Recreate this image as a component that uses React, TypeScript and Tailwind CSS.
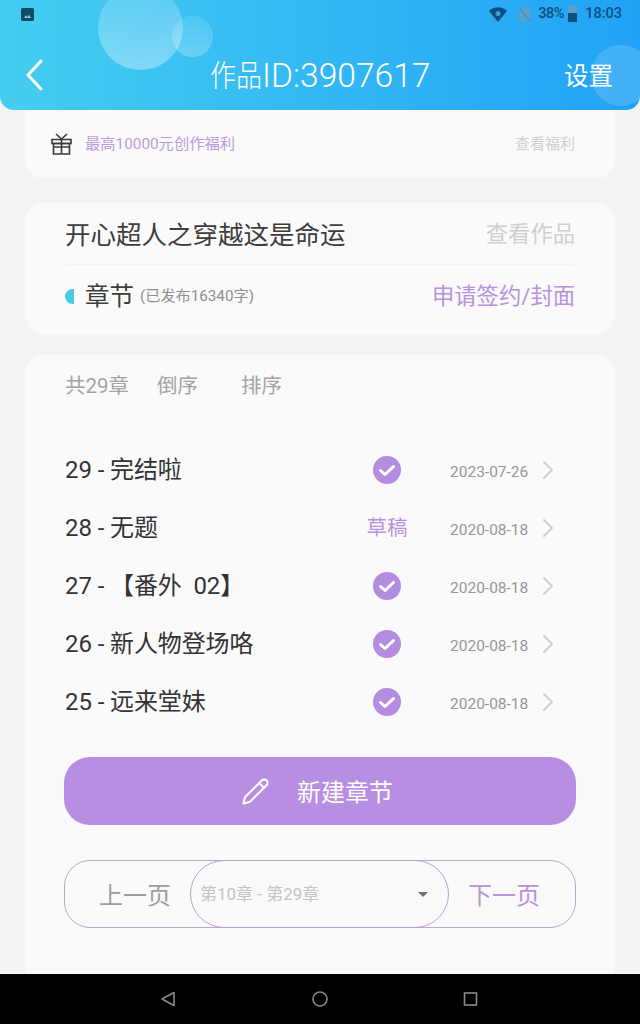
import { ChevronRight, Pencil } from "lucide-react";

const FONT = "font-['Roboto','Noto_Sans_CJK_SC',sans-serif]";

const CHAPTERS = [
  { title: "29 - 完结啦", date: "2023-07-26", draft: false },
  { title: "28 - 无题", date: "2020-08-18", draft: true },
  { title: "27 - 【番外  02】", date: "2020-08-18", draft: false },
  { title: "26 - 新人物登场咯", date: "2020-08-18", draft: false },
  { title: "25 - 远来堂妹", date: "2020-08-18", draft: false },
];

function StatusBar() {
  return (
    <div className="flex h-7 items-center justify-between pl-[21px] pr-[18px] text-[#0d4f7d]">
      <svg width="13" height="13" viewBox="0 0 13 13">
        <rect width="13" height="13" rx="1.5" fill="#0f4c68" />
        <path d="M3 10l2-3 1.500 2 1.500-2.500L10 10z" fill="#7fc4df" />
      </svg>
      <div className="flex items-center text-[14.500px] font-medium">
        <svg width="18" height="15" viewBox="0 0 18 15">
          <path d="M0 4C5 -1 13 -1 18 4L9 15z" fill="#0d4f7d" />
          <circle cx="9" cy="6.500" r="2.500" fill="#3d9fd6" />
        </svg>
        <svg className="ml-[12px]" width="11" height="15" viewBox="0 0 11 15">
          <path d="M3 0h8v15H0V3z" fill="#5c9fc9" />
          <path d="M0.500 1l10 13" stroke="#2b8fd0" strokeWidth="1.200" />
        </svg>
        <span className="ml-[8px] w-[30px] tracking-[-0.5px]">38%</span>
        <div className="flex h-[16px] w-[9px] flex-col justify-end rounded-[1px] bg-[#5c9fc9]">
          <div className="h-[9px] bg-[#0d4f7d]" />
        </div>
        <span className="ml-[8px]">18:03</span>
      </div>
    </div>
  );
}

function Header() {
  return (
    <header className="relative h-[110px] overflow-hidden rounded-b-[14px] bg-gradient-to-r from-[#45cdf0] to-[#22a2f6] text-white">
      <div className="absolute left-[98px] top-[-14px] h-[84px] w-[85px] rounded-full bg-gradient-to-b from-white/15 to-white/35" />
      <div className="absolute left-[172px] top-[16px] h-[41px] w-[41px] rounded-full bg-gradient-to-b from-white/10 to-white/25" />
      <div className="absolute left-[591px] top-[45px] h-[61px] w-[60px] rounded-full bg-white/15" />
      <div className="relative">
        <StatusBar />
        <div className="relative flex h-[82px] items-center justify-between pl-[25px] pr-[27px] pt-[12px]">
          <svg width="18" height="32" viewBox="0 0 18 32" fill="none">
            <path d="M16 2L3 16l13 14" stroke="white" strokeWidth="3" strokeLinecap="round" strokeLinejoin="round" />
          </svg>
          <h1 className="absolute left-[210px] top-[28px] flex h-[40px] items-center whitespace-nowrap font-light">
            <span className="inline-block scale-y-[1.15] text-[26px]">作品</span>
            <span className="text-[33.600px]">ID:3907617</span>
          </h1>
          <span className="mt-[3px] text-[24.500px] leading-8">设置</span>
        </div>
      </div>
    </header>
  );
}

function App() {
  return (
    <div className={`${FONT} relative h-[1024px] w-[640px] overflow-hidden bg-[#f4f4f4]`}>
      <Header />

      <main className="flex flex-col px-[26px]">
        <section className="flex h-[68px] items-center rounded-b-[16px] bg-[#fafafa] pl-[25px] pr-[39px]">
          <svg width="21" height="22" viewBox="0 0 21 22" fill="none" stroke="#3a3a3a" strokeWidth="1.600">
            <path d="M5 1l5.500 5L16 1" />
            <path d="M1 6.500h19v4H1z" />
            <path d="M2.500 10.500h16V21h-16z" />
            <path d="M10.500 6.500V21M2.500 14h16" />
          </svg>
          <span className="ml-[13px] mt-[1px] text-[15.300px] text-[#bb9bd9]">最高10000元创作福利</span>
          <span className="ml-auto mt-[1px] text-[15px] text-[#cfcfcf]">查看福利</span>
        </section>

        <section className="mt-[25px] h-[131px] rounded-[16px] bg-[#fafafa] px-[39px]">
          <div className="flex h-[62px] items-center justify-between border-b border-[#f3f3f3]">
            <span className="mt-[4px] text-[25.500px] text-[#3d3d3d]">开心超人之穿越这是命运</span>
            <span className="mt-[2px] text-[22.300px] text-[#cfcfcf]">查看作品</span>
          </div>
          <div className="flex h-[62px] items-center">
            <span className="h-[15px] w-[9px] rounded-l-full bg-[#45cbe8]" />
            <span className="ml-[11px] mt-[3px] text-[24.500px] text-[#3d3d3d]">章节</span>
            <span className="ml-[6px] mt-[1px] text-[15.200px] text-[#8f8f8f]">(已发布16340字)</span>
            <span className="ml-auto mt-[2px] text-[22.300px] text-[#b792dd]">申请签约/封面</span>
          </div>
        </section>

        <section className="mt-[21px] h-[640px] rounded-[16px] bg-[#fafafa] px-[38px]">
          <div className="flex h-[62px] items-center pl-[1px] text-[20.500px] text-[#a3a3a3]">
            <span className="w-[92px]">共29章</span>
            <span className="w-[84px]">倒序</span>
            <span>排序</span>
          </div>

          <ul className="mt-[24px]">
            {CHAPTERS.map((c) => (
              <li key={c.title} className="flex h-[58px] items-center pl-[1px]">
                <span className="whitespace-pre text-[24px] tracking-[-0.1px] text-[#333333]">{c.title}</span>
                <div className="ml-auto flex w-[44px] justify-center">
                  {c.draft ? (
                    <span className="text-[20.500px] text-[#b792dd]">草稿</span>
                  ) : (
                    <svg width="28" height="28" viewBox="0 0 28 28">
                      <circle cx="14" cy="14" r="14" fill="#b48ce0" />
                      <path d="M7.500 14.500l4.500 4 8.500-8" fill="none" stroke="white" strokeWidth="3" strokeLinecap="round" strokeLinejoin="round" />
                    </svg>
                  )}
                </div>
                <span className="ml-[41px] mt-[6px] w-[78px] whitespace-nowrap text-[15.500px] text-[#979797]">{c.date}</span>
                <ChevronRight size={32} strokeWidth={1.500} className="ml-[4px] mr-[12px] text-[#cfcfcf]" />
              </li>
            ))}
          </ul>

          <button type="button" className="mt-[26px] flex h-[68px] w-[512px] items-center justify-center rounded-[26px] bg-[#b78ee2] pr-[6px] text-white">
            <Pencil size={29} strokeWidth={1.700} />
            <span className="ml-[27px] mt-[3px] text-[24px]">新建章节</span>
          </button>

          <div className="relative mt-[35px] flex h-[68px] w-[512px] items-center justify-between rounded-[26px] border border-[#b9a8c8] pl-[34px] pr-[35px] text-[24px]">
            <span className="mt-[3px] text-[#9e9e9e]">上一页</span>
            <span className="mt-[3px] text-[#b792dd]">下一页</span>
            <div className="absolute left-[125px] top-[-1px] flex h-[68px] w-[259px] items-center justify-between rounded-[34px] border border-[#b9a0d4] pl-[9px] pr-[20px]">
              <span className="mt-[2px] text-[17px] text-[#c4c4c4]">第10章 - 第29章</span>
              <span className="h-0 w-0 border-x-[5px] border-t-[5px] border-x-transparent border-t-[#6e6e6e]" />
            </div>
          </div>
        </section>
      </main>

      <nav className="absolute inset-x-0 bottom-0 flex h-[50px] items-center justify-center bg-black">
        <svg width="320" height="20" viewBox="0 0 320 20" fill="none" stroke="#8a8a8a" strokeWidth="1.600">
          <path d="M14 3.500L2 10l12 6.500z" strokeLinejoin="round" />
          <circle cx="160" cy="10" r="7" />
          <rect x="304.500" y="4" width="12" height="12" />
        </svg>
      </nav>
    </div>
  );
}

export default App;
